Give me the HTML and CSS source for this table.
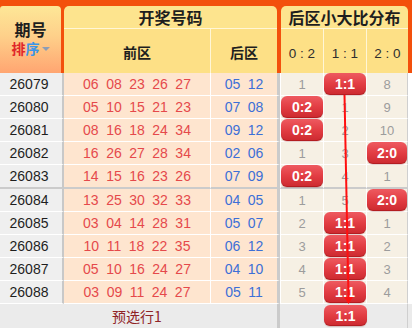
FILE: index.html
```html
<!DOCTYPE html>
<html lang="zh-CN">
<head>
<meta charset="utf-8">
<title>后区小大比分布</title>
<link rel="stylesheet" href="styles.css">
</head>
<body>
<div class="board">
  <div class="head">
    <div class="h-qi">
      <div class="h-qi-title">期号</div>
      <div class="h-sort"><span class="s-red">排</span><span class="s-blue">序</span><span class="s-tri"></span></div>
    </div>
    <div class="h-group h-draw">
      <div class="h-title">开奖号码</div>
      <div class="h-sub">
        <div class="h-front">前区</div>
        <div class="h-back">后区</div>
      </div>
    </div>
    <div class="h-group h-dist">
      <div class="h-title">后区小大比分布</div>
      <div class="h-sub">
        <div class="h-r">0 : 2</div>
        <div class="h-r">1 : 1</div>
        <div class="h-r h-r-last">2 : 0</div>
      </div>
    </div>
  </div>

  <div class="body">
    <div class="row">
      <div class="c-qi">26079</div>
      <div class="c-front"><span>06</span><span>08</span><span>23</span><span>26</span><span>27</span></div>
      <div class="c-back"><span>05</span><span>12</span></div>
      <div class="c-r c-r1">1</div>
      <div class="c-r c-r2"><div class="badge">1:1</div></div>
      <div class="c-r c-r3">8</div>
    </div>
    <div class="row">
      <div class="c-qi">26080</div>
      <div class="c-front"><span>05</span><span>10</span><span>15</span><span>21</span><span>23</span></div>
      <div class="c-back"><span>07</span><span>08</span></div>
      <div class="c-r c-r1"><div class="badge">0:2</div></div>
      <div class="c-r c-r2">1</div>
      <div class="c-r c-r3">9</div>
    </div>
    <div class="row">
      <div class="c-qi">26081</div>
      <div class="c-front"><span>08</span><span>16</span><span>18</span><span>24</span><span>34</span></div>
      <div class="c-back"><span>09</span><span>12</span></div>
      <div class="c-r c-r1"><div class="badge">0:2</div></div>
      <div class="c-r c-r2">2</div>
      <div class="c-r c-r3">10</div>
    </div>
    <div class="row">
      <div class="c-qi">26082</div>
      <div class="c-front"><span>16</span><span>26</span><span>27</span><span>28</span><span>34</span></div>
      <div class="c-back"><span>02</span><span>06</span></div>
      <div class="c-r c-r1">1</div>
      <div class="c-r c-r2">3</div>
      <div class="c-r c-r3"><div class="badge">2:0</div></div>
    </div>
    <div class="row row-sep">
      <div class="c-qi">26083</div>
      <div class="c-front"><span>14</span><span>15</span><span>16</span><span>23</span><span>26</span></div>
      <div class="c-back"><span>07</span><span>09</span></div>
      <div class="c-r c-r1"><div class="badge">0:2</div></div>
      <div class="c-r c-r2">4</div>
      <div class="c-r c-r3">1</div>
    </div>
    <div class="row">
      <div class="c-qi">26084</div>
      <div class="c-front"><span>13</span><span>25</span><span>30</span><span>32</span><span>33</span></div>
      <div class="c-back"><span>04</span><span>05</span></div>
      <div class="c-r c-r1">1</div>
      <div class="c-r c-r2">5</div>
      <div class="c-r c-r3"><div class="badge">2:0</div></div>
    </div>
    <div class="row">
      <div class="c-qi">26085</div>
      <div class="c-front"><span>03</span><span>04</span><span>14</span><span>28</span><span>31</span></div>
      <div class="c-back"><span>05</span><span>07</span></div>
      <div class="c-r c-r1">2</div>
      <div class="c-r c-r2"><div class="badge">1:1</div></div>
      <div class="c-r c-r3">1</div>
    </div>
    <div class="row">
      <div class="c-qi">26086</div>
      <div class="c-front"><span>10</span><span>11</span><span>18</span><span>22</span><span>35</span></div>
      <div class="c-back"><span>06</span><span>12</span></div>
      <div class="c-r c-r1">3</div>
      <div class="c-r c-r2"><div class="badge">1:1</div></div>
      <div class="c-r c-r3">2</div>
    </div>
    <div class="row">
      <div class="c-qi">26087</div>
      <div class="c-front"><span>05</span><span>10</span><span>16</span><span>24</span><span>27</span></div>
      <div class="c-back"><span>04</span><span>10</span></div>
      <div class="c-r c-r1">4</div>
      <div class="c-r c-r2"><div class="badge">1:1</div></div>
      <div class="c-r c-r3">3</div>
    </div>
    <div class="row row-last">
      <div class="c-qi">26088</div>
      <div class="c-front"><span>03</span><span>09</span><span>11</span><span>24</span><span>27</span></div>
      <div class="c-back"><span>05</span><span>11</span></div>
      <div class="c-r c-r1">5</div>
      <div class="c-r c-r2"><div class="badge">1:1</div></div>
      <div class="c-r c-r3">4</div>
    </div>

    <div class="foot">
      <div class="f-label">预选行1</div>
      <div class="f-r"></div>
      <div class="f-r"><div class="badge">1:1</div></div>
      <div class="f-r f-r3"></div>
    </div>
  </div>

  <svg class="trend" width="412" height="328" viewBox="0 0 412 328" aria-hidden="true">
    <line x1="344.5" y1="95" x2="348.5" y2="298" stroke="#ff1010" stroke-width="2"/>
    <polygon points="344,297 353,297 348.5,304" fill="#ff1010"/>
  </svg>
</div>
</body>
</html>
```

FILE: styles.css
```css
* { box-sizing: border-box; }

body {
  margin: 0;
  width: 412px;
  height: 328px;
  overflow: hidden;
  background: #ffffff;
  font-family: "Liberation Sans", Arial, "Noto Sans CJK SC", sans-serif;
  color: #222;
}

.board {
  position: relative;
  width: 412px;
  height: 328px;
}

/* ---------- header ---------- */
.head {
  display: flex;
  height: 73px;
  padding: 6px 4px 0 0;
  background: #f3500c;
}

.h-qi {
  width: 61px;
  margin-right: 3px;
  border-radius: 3px 4px 0 0;
  background: linear-gradient(#fde797 0%, #fed08a 45%, #ffa571 100%);
  display: flex;
  flex-direction: column;
  align-items: center;
  justify-content: center;
  font-family: "Noto Sans CJK SC", sans-serif;
  font-weight: bold;
  padding-bottom: 1px;
}

.h-qi-title {
  font-size: 16px;
  line-height: 19px;
  color: #1e1e1e;
}

.h-sort {
  display: flex;
  align-items: center;
  font-size: 14px;
  line-height: 19px;
}

.s-red { color: #e0262a; }
.s-blue { color: #3a95ea; }
.s-tri {
  width: 0;
  height: 0;
  margin-left: 2px;
  border-left: 4px solid transparent;
  border-right: 4px solid transparent;
  border-top: 4px solid #8d9db6;
}

.h-group {
  display: flex;
  flex-direction: column;
}

.h-draw { width: 213px; margin-right: 4px; }
.h-dist { width: 127px; }

.h-title {
  height: 23px;
  border-bottom: 1px solid #fff6d6;
  border-radius: 5px 5px 0 0;
  background: #fde48e;
  text-align: center;
  font-family: "Noto Sans CJK SC", sans-serif;
  font-weight: bold;
  font-size: 16px;
  line-height: 22px;
  color: #1e1e1e;
}

.h-sub {
  flex: 1;
  display: flex;
  background: #fde086;
}

.h-front, .h-back {
  display: flex;
  align-items: center;
  justify-content: center;
  font-family: "Noto Sans CJK SC", sans-serif;
  font-weight: bold;
  font-size: 14px;
  color: #1e1e1e;
  padding-top: 1px;
}

.h-front { width: 147px; border-right: 1px solid #fff6d6; }
.h-back { width: 66px; }

.h-r {
  width: 43px;
  border-right: 1px solid #fff6d6;
  display: flex;
  align-items: center;
  justify-content: center;
  font-size: 13.5px;
  color: #2e2e2e;
  padding-top: 4px;
}

.h-r-last { width: 41px; border-right: 0; }

/* ---------- body ---------- */
.row {
  display: grid;
  grid-template-columns: 64px 147px 69px 44px 43px 41px;
  height: 23px;
}

.row > div {
  border-bottom: 1px solid #ffffff;
}

.row-sep { height: 24px; }
.row-sep > div { border-bottom: 2px solid #cbcbcb; }

.c-qi {
  display: flex;
  align-items: center;
  justify-content: center;
  background: #efefef;
  border-right: 2px solid #c8c8c8;
  font-size: 14px;
  color: #1e1e1e;
  padding-right: 4px;
}

.c-front, .c-back {
  display: flex;
  align-items: center;
  justify-content: center;
  gap: 7.5px;
  background: #fee5cf;
  font-size: 14px;
}

.c-front { color: #e5494b; border-right: 1px solid #ffffff; }
.c-back { color: #3c6fd7; border-right: 3px solid #cbcbcb; }

.c-r {
  display: flex;
  align-items: center;
  justify-content: center;
  background: #f6f0e4;
  font-size: 13px;
  color: #9c9c9c;
}

.c-r1 { border-left: 1px solid #ffffff; border-right: 1px solid #ffffff; }
.c-r2 { border-right: 1px solid #ffffff; }
.c-r3 { border-right: 1px solid #cfcfcf; }

.badge {
  width: 100%;
  height: 100%;
  display: flex;
  align-items: center;
  justify-content: center;
  border-radius: 6px;
  background: linear-gradient(#ee5a60 0%, #e23d43 50%, #cc292f 100%);
  box-shadow: inset 0 -1px 0 rgba(120, 0, 0, 0.3), 0 1px 1px rgba(120, 0, 0, 0.2);
  color: #ffffff;
  font-weight: bold;
  font-size: 14px;
}

/* ---------- footer ---------- */
.foot {
  display: grid;
  grid-template-columns: 280px 44px 43px 41px;
  height: 24px;
  background: #ebebeb;
}

.f-label {
  display: flex;
  align-items: center;
  justify-content: center;
  border-right: 3px solid #cbcbcb;
  font-family: "Noto Sans CJK SC", sans-serif;
  font-size: 14px;
  color: #8f2326;
  padding-right: 3px;
}

.f-r { padding: 1px 0 2px; }
.f-r3 { border-right: 1px solid #cfcfcf; }

.trend {
  position: absolute;
  left: 0;
  top: 0;
  pointer-events: none;
}
```
